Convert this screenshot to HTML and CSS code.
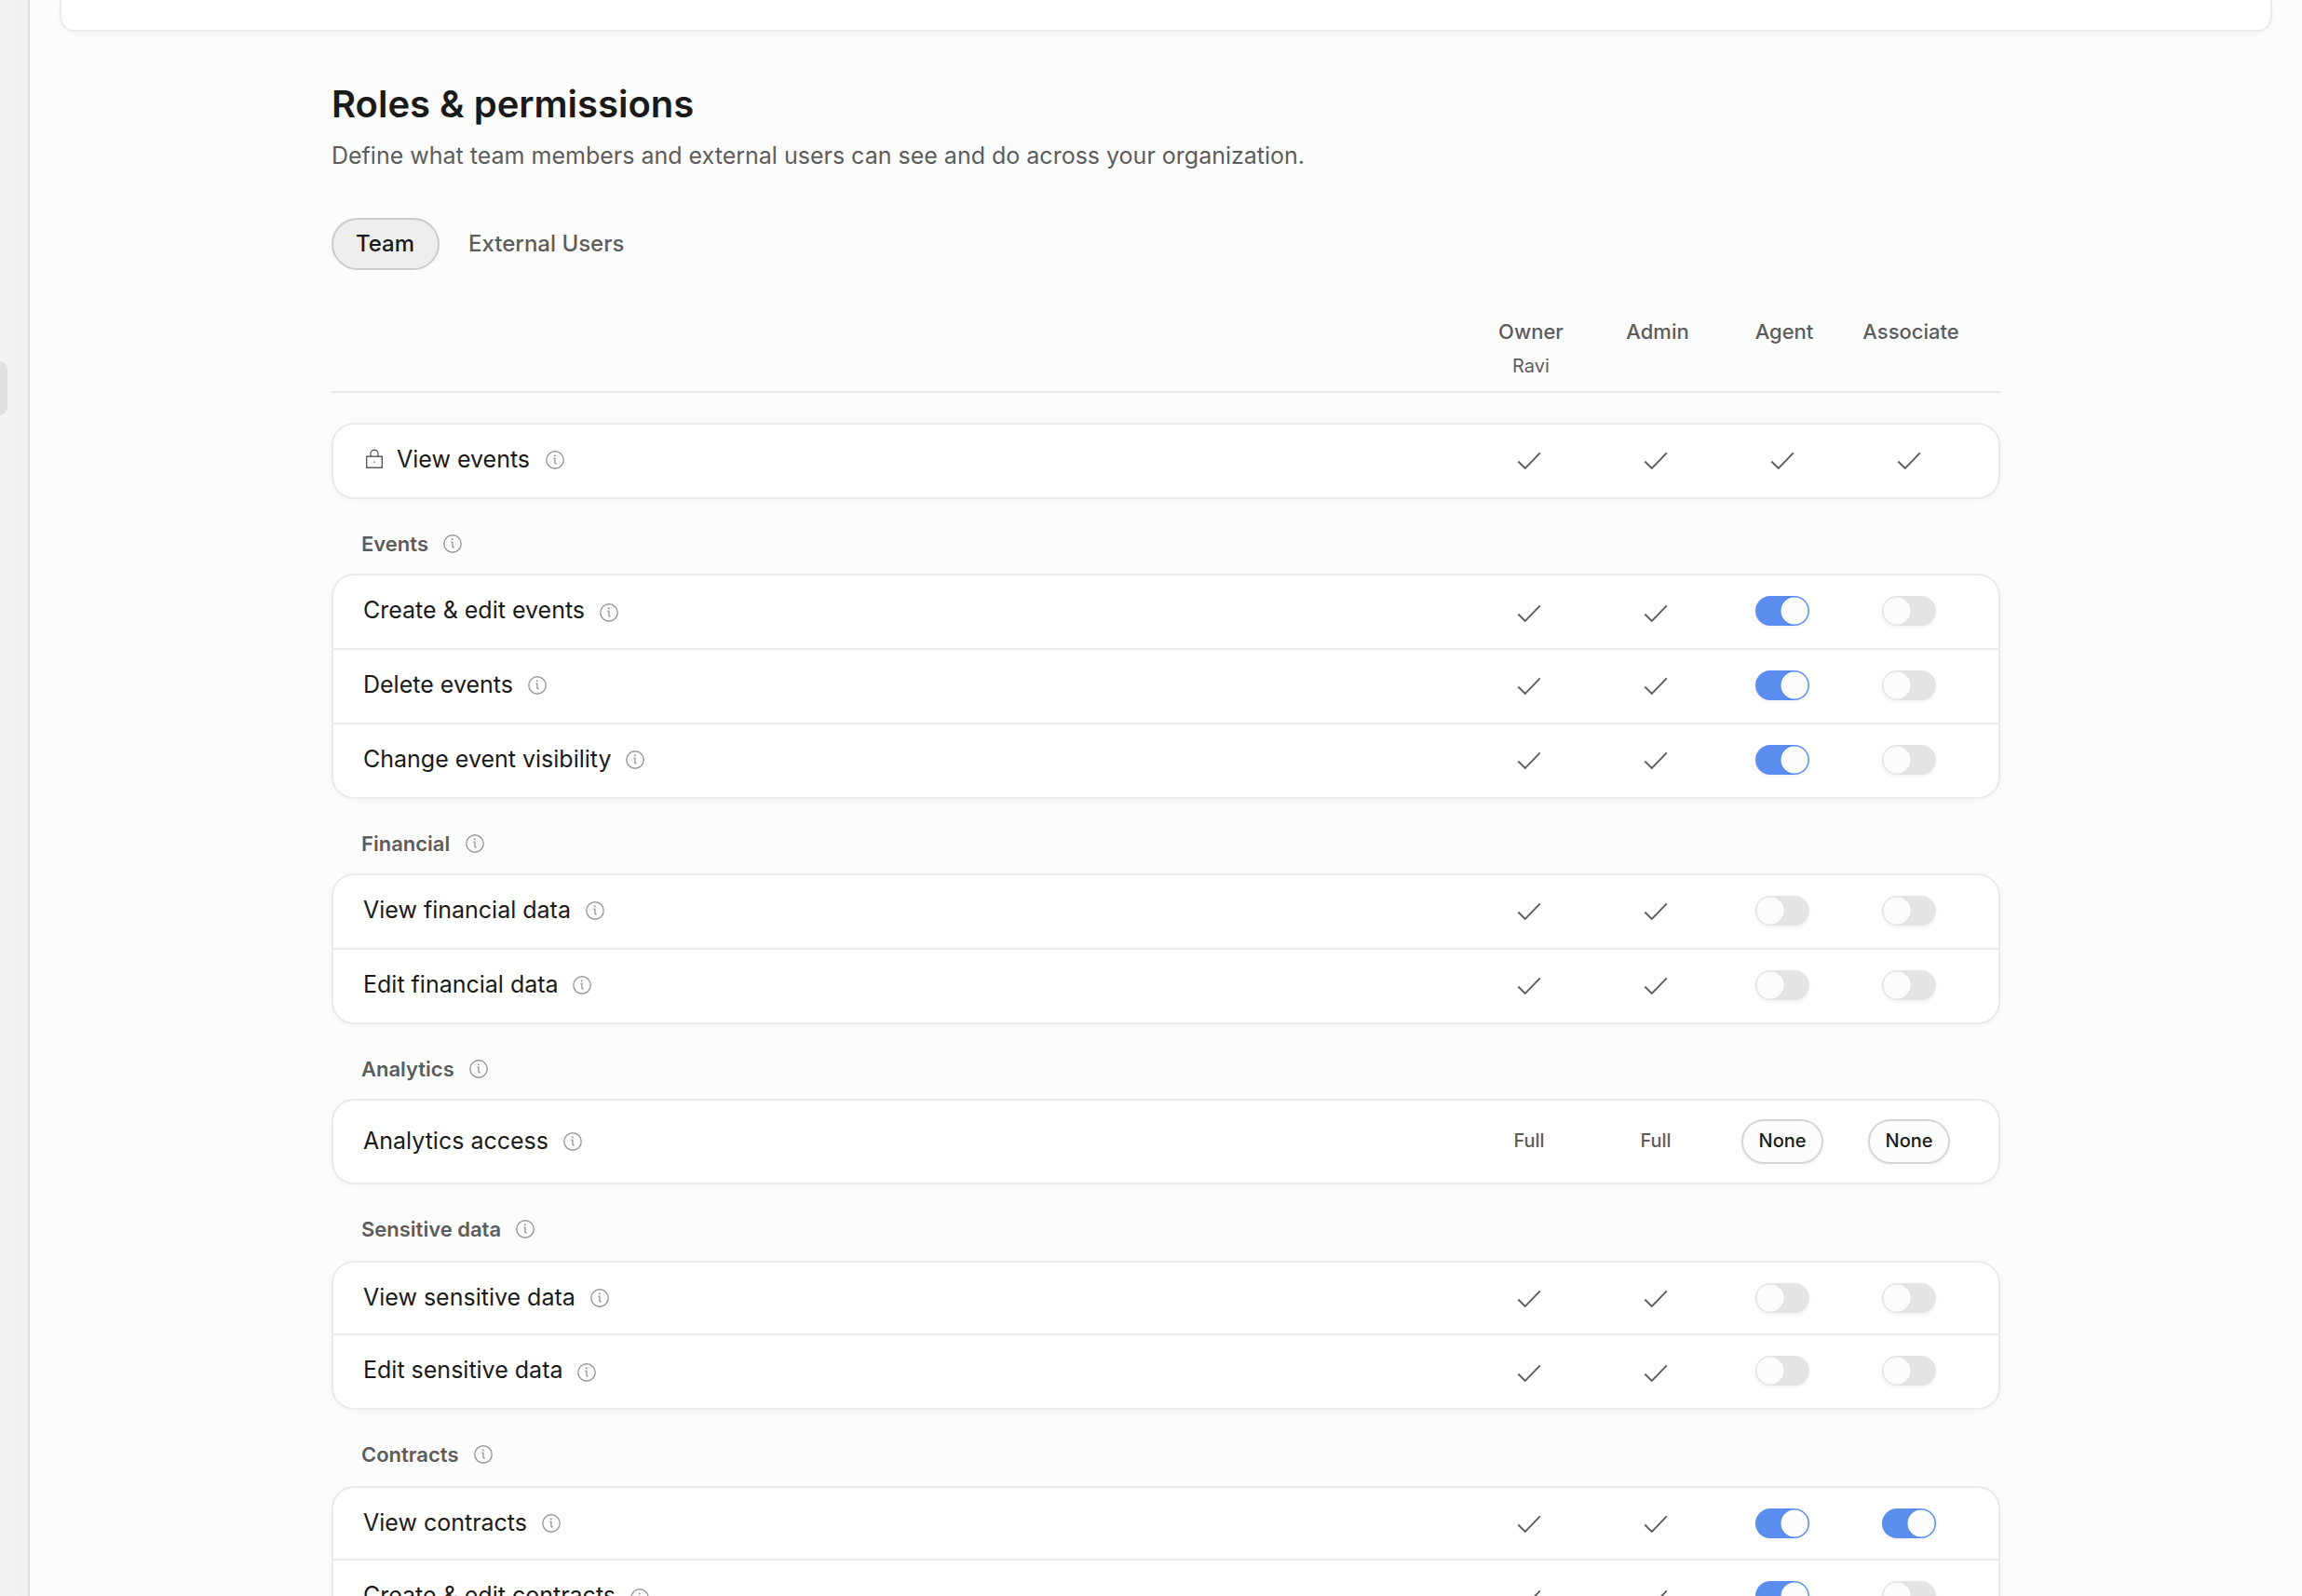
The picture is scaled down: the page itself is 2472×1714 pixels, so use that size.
FILE: index.html
```html
<!DOCTYPE html>
<html lang="en">
<head>
<meta charset="utf-8">
<title>Roles &amp; permissions</title>
<link rel="stylesheet" href="styles.css">
</head>
<body>
<svg class="sprite" aria-hidden="true">
  <symbol id="info" viewBox="0 0 20 20"><circle cx="10" cy="10" r="9.2"/><path d="M8.4 8.2h1.5v5.6M9.9 13.8h1.8"/><circle class="dot" cx="9.8" cy="5.3" r="1"/></symbol>
  <symbol id="check" viewBox="0 0 26 20"><path d="M1.300 10.500 8.800 18 24.800 1.400"/></symbol>
  <symbol id="lock" viewBox="0 0 20 22"><path d="M1.700 8.300h16.600v12H1.700zM6 8.300V5.200a4 4 0 0 1 8 0v3.100"/><circle class="dot" cx="10" cy="14.300" r="1.100"/></symbol>
</svg>
<div class="app">
  <aside class="sidebar"><div class="nav-item"></div></aside>
  <main class="main">
    <div class="top-card"></div>
    <div class="content" id="content">
      <h1 class="title">Roles &amp; permissions</h1>
      <p class="subtitle">Define what team members and external users can see and do across your organization.</p>
      <div class="tabs"><button class="tab tab-active">Team</button><button class="tab">External Users</button></div>
      <div class="head">
        <div class="role">Owner<span class="person">Ravi</span></div>
        <div class="role">Admin</div>
        <div class="role">Agent</div>
        <div class="role">Associate</div>
      </div>
    </div>
  </main>
</div>
<script src="app.js"></script>
</body>
</html>
```
FILE: styles.css
```css
* { box-sizing: border-box; }
body { margin: 0; background: #fcfcfc; font-family: Inter, "Liberation Sans", sans-serif; color: #1a1a1a; }
.sprite { display: none; }
.app { display: flex; height: 1714px; overflow: hidden; }
.sidebar { width: 32px; flex: none; border-right: 2px solid #dedede; background: linear-gradient(90deg, #f3f3f3 50%, #efefef); padding-top: 388px; }
.nav-item { width: 8px; height: 58px; background: #e0e0e0; border-radius: 0 14px 14px 0 / 0 16px 16px 0; }
.main { flex: 1; padding: 0 32px; }
.top-card { height: 34px; border: 2px solid #ebebeb; border-top: 0; border-radius: 0 0 16px 16px; background: #fff; box-shadow: 0 2px 4px rgba(0,0,0,.03); }
.content { width: 1792px; margin: 0 auto; padding-top: 48px; }
.title { margin: 0; height: 60px; line-height: 60px; font-size: 40px; font-weight: 600; letter-spacing: 0; white-space: nowrap; }
.subtitle { margin: 9px 0 0; height: 32px; line-height: 32px; font-size: 25px; color: #5c5c5c; white-space: nowrap; }
.tabs { display: flex; gap: 4px; margin-top: 51px; }
.tab { height: 56px; padding: 0 25px 2px; border: 2px solid transparent; border-radius: 28px; background: transparent; font: 500 24px Inter, sans-serif; color: #5c5c5c; }
.tab-active { width: 116px; padding: 0 1px 2px 0; background: #eee; border-color: #ccc; color: #1a1a1a; }
.head { display: flex; justify-content: flex-end; height: 82px; margin: 50px 0 32px; padding: 0 28px 0 0; border-bottom: 2px solid #e6e6e6; }
.role { width: 136px; display: flex; flex-direction: column; align-items: center; font-size: 22px; font-weight: 500; line-height: 32px; color: #5c5c5c; }
.person { font-size: 20px; font-weight: 400; line-height: 28px; margin-top: 7px; }
.section { display: flex; align-items: center; height: 80px; padding: 16px 0 0 32px; font-size: 22px; font-weight: 600; color: #5c5c5c; }
.section-tall { height: 82px; padding-bottom: 2px; }
.card { border: 2px solid #ebebeb; border-radius: 24px; background: #fff; box-shadow: 0 2px 4px rgba(0,0,0,.03); }
.row { display: flex; height: 78px; padding: 0 28px 0 32px; align-items: flex-start; }
.row-short { height: 76px; }
.row-tall { height: 88px; padding-top: 6px; }
.row + .row { border-top: 2px solid #ebebeb; box-sizing: content-box; }
.row .label { flex: 1; display: flex; height: 74px; align-items: center; font-size: 25px; white-space: nowrap; }
.icon { flex: none; fill: none; stroke: #999; stroke-width: 1.4; }
.info { width: 20px; height: 20px; margin-left: 16.4px; }
.dot { fill: #999; stroke: none; }
.label .info { margin-top: 2px; margin-left: 15.8px; }
.locked .label .info { margin-left: 17px; }
.low .label .info { margin-top: 6px; }
.lock { width: 20px; height: 22px; margin: 0 14px 0 2px; stroke: #5c5c5c; }
.cell { width: 136px; height: 76px; display: flex; align-items: center; justify-content: center; font-size: 20px; font-weight: 500; color: #5c5c5c; }
.row-tall .cell { height: 74px; }
.check { width: 26px; height: 20px; stroke: #5c5c5c; stroke-width: 1.9; margin-top: 2px; }
.low .check { margin-top: 6px; }
.switch { width: 58px; height: 32px; border-radius: 16px; background: #e4e4e4; padding: 2px; box-shadow: 0 2px 4px rgba(0,0,0,.06); display: flex; }
.switch::after { content: ""; width: 28px; height: 28px; border-radius: 50%; background: #fcfcfc; box-shadow: 0 0 0 .5px #fcfcfc; }
.switch-on { background: #5b8def; justify-content: flex-end; }
.choice { width: 88px; height: 48px; margin-top: 2px; padding: 0 0 2px; border: 2px solid #d6d6d6; border-radius: 24px; background: #fcfcfc; box-shadow: 0 2px 4px rgba(0,0,0,.05); font: 500 20px Inter, sans-serif; color: #1a1a1a; }
```
FILE: app.js
```js
const icon = (name) => `<svg class="icon ${name}"><use href="#${name}"/></svg>`;

const cells = {
  c: () => icon('check'),
  1: () => '<div class="switch switch-on"></div>',
  0: () => '<div class="switch"></div>',
  f: () => 'Full',
  n: () => '<button class="choice">None</button>',
};

// Each row: label, one code per role, extra row classes.
const groups = [
  { rows: [['View events', 'cccc', 'locked']] },
  { name: 'Events', rows: [['Create &amp; edit events', 'cc10', 'low'], ['Delete events', 'cc10', ''], ['Change event visibility', 'cc10', '']] },
  { name: 'Financial', rows: [['View financial data', 'cc00', ''], ['Edit financial data', 'cc00', '']] },
  { name: 'Analytics', rows: [['Analytics access', 'ffnn', 'row-tall']] },
  { name: 'Sensitive data', tall: true, rows: [['View sensitive data', 'cc00', 'row-short'], ['Edit sensitive data', 'cc00', 'low']] },
  { name: 'Contracts', tall: true, rows: [['View contracts', 'cc11', 'row-short'], ['Create &amp; edit contracts', 'cc10', 'low']] },
];

const row = ([label, codes, cls]) => `<div class="row ${cls}">
  <div class="label">${cls === 'locked' ? icon('lock') : ''}<span>${label}</span>${icon('info')}</div>
  ${[...codes].map((c) => `<div class="cell">${cells[c]()}</div>`).join('')}
</div>`;

document.getElementById('content').insertAdjacentHTML('beforeend', groups.map((g) =>
  (g.name ? `<div class="section${g.tall ? ' section-tall' : ''}"><span>${g.name}</span>${icon('info')}</div>` : '') +
  `<div class="card">${g.rows.map(row).join('')}</div>`).join(''));
```
